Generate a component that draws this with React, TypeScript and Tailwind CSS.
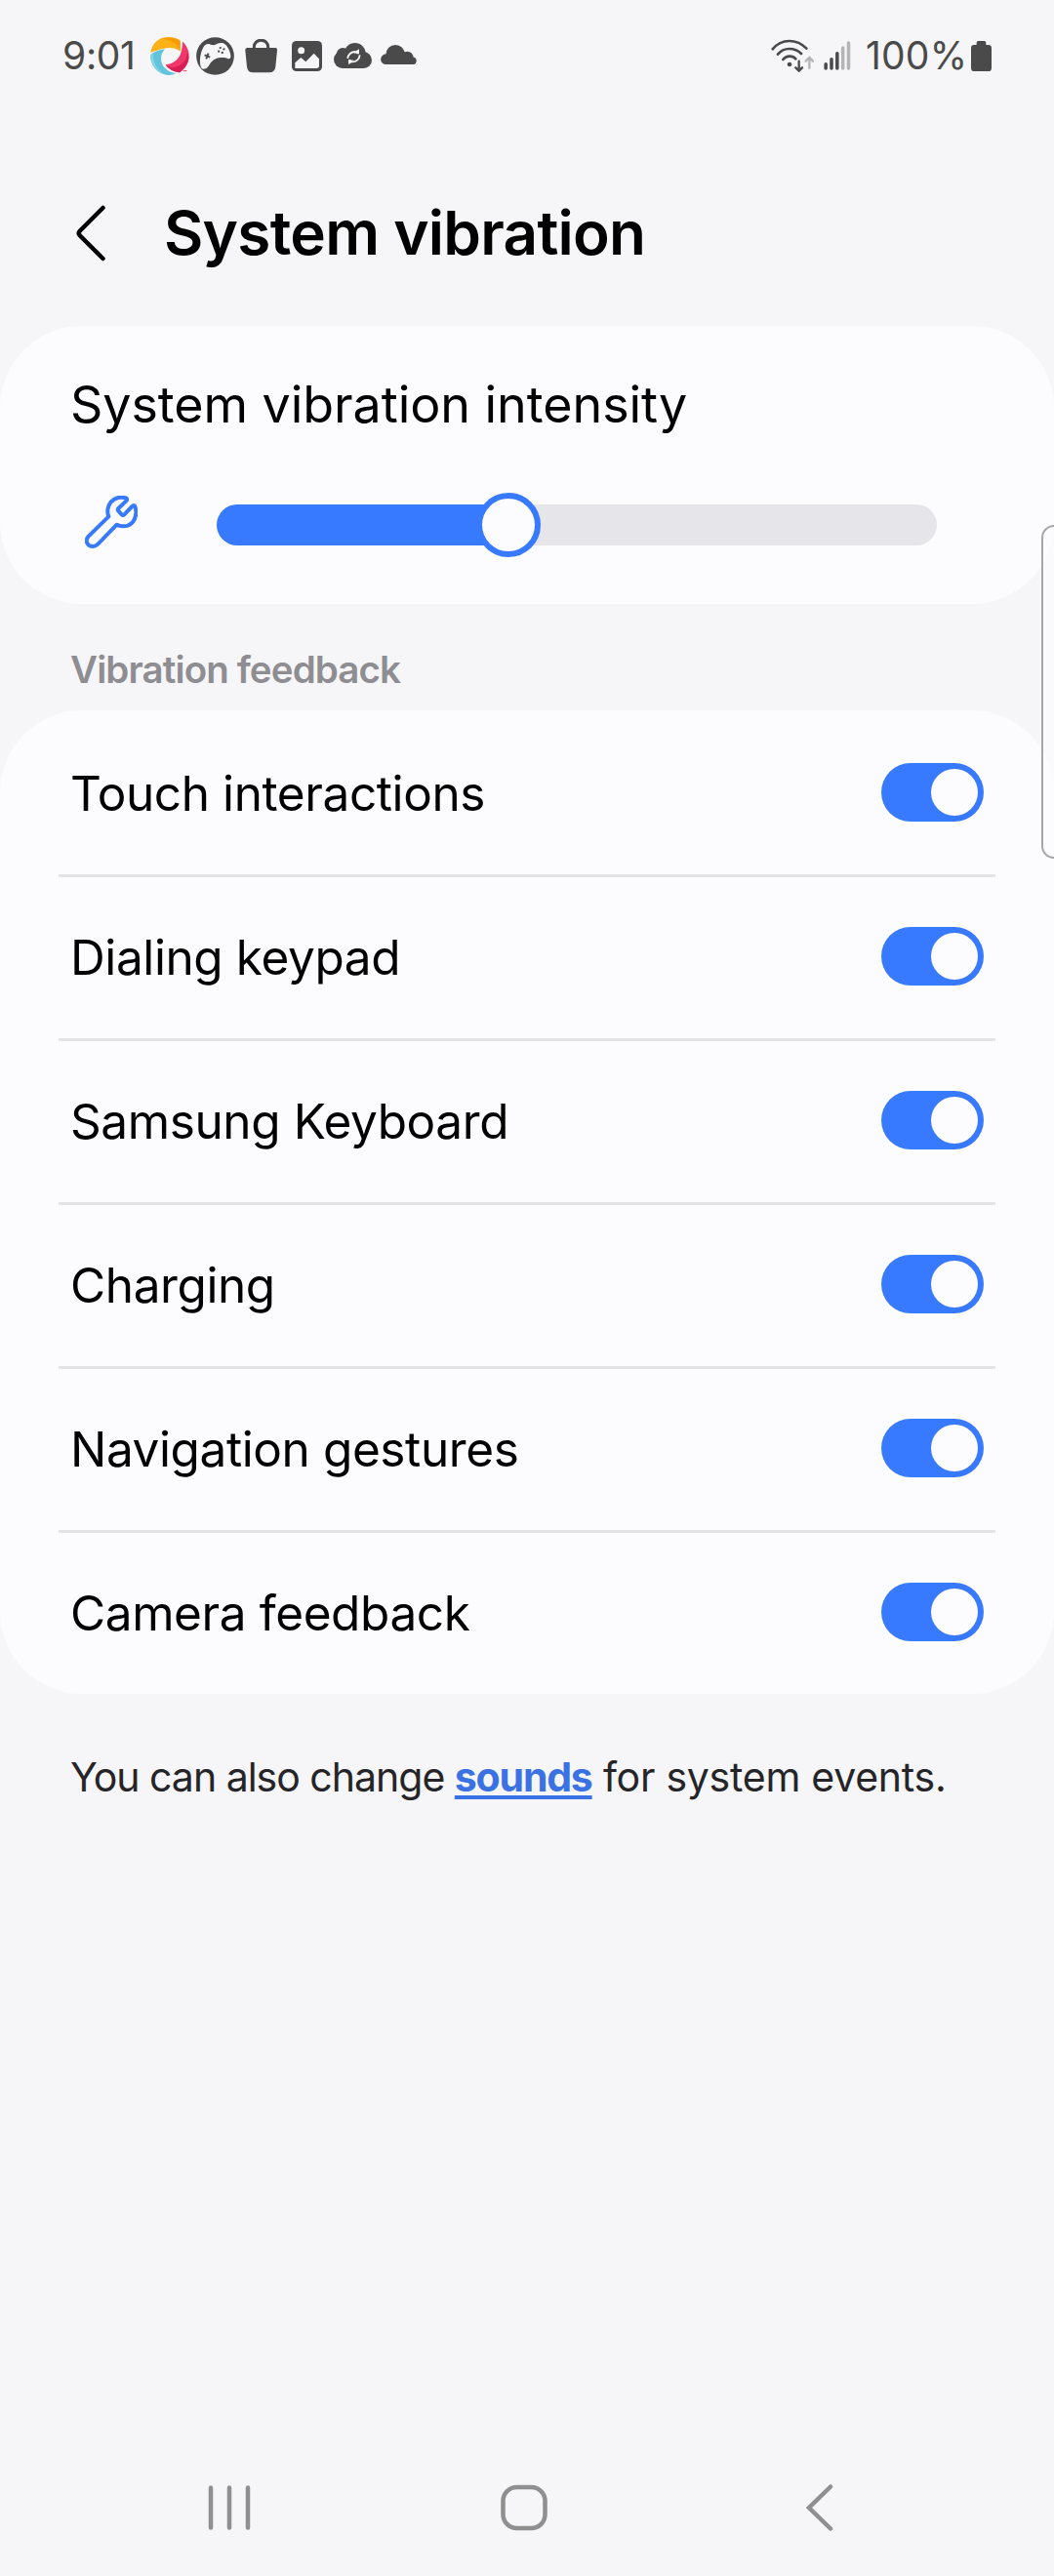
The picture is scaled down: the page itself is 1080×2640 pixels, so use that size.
import React, { useState } from "react";

function StatusBar() {
  return (
    <div className="flex h-[114px] shrink-0 items-center pl-[64px] pr-[64px] text-[39px] text-[#4a4a4a]">
      <span className="w-[90px] tracking-[-0.3px]">9:01</span>
      <svg className="h-[39px] w-[40px]" viewBox="311 54 120 117">
        <path d="M312 102C316 72 340 53 366 54C384 54 397 59 403 65V98C393 88 372 84 352 89C338 92 324 97 312 102Z" fill="#fbb216" />
        <path d="M345 59C372 52 393 59 403 65V98C398 78 378 62 345 59Z" fill="#f99a0b" />
        <path d="M410 68C424 80 431 98 430 115C429 134 418 152 401 163C385 162 368 153 358 139C382 137 400 122 406 100C409 88 410 78 410 68Z" fill="#f0386b" />
        <path d="M425 98C426 128 405 145 378 148C372 147 363 144 358 139C368 153 385 162 401 163C424 147 435 122 425 98Z" fill="#d81e55" />
        <path d="M311 109C322 99 338 93 356 91C340 108 340 134 356 149C366 159 378 163 389 166C380 171 369 172 360 170C331 166 311 140 311 109Z" fill="#62c3dc" />
        <path d="M321 101C315 126 331 157 360 170C331 166 311 140 311 109Z" fill="#86d3e4" />
        <path d="M412 158H423" stroke="#f0386b" strokeWidth="3" />
      </svg>
      <svg className="ml-[7px] h-[39px] w-[39px]" viewBox="452 54 118 117">
        <circle cx="511" cy="112.5" r="58.5" fill="#4a4a4a" />
        <path d="M468 149C461 136 463 105 474 86C479 76 487 73 495 76C501 78 505 80 511 77C518 74 524 70 533 72C546 75 556 92 559 111C560 119 556 122 550 120C543 117 533 116 522 118C505 122 499 130 492 141C484 153 473 156 468 149Z" fill="#f6f6f8" />
        <path d="M478 109L495 116M490 104L483 121" stroke="#4a4a4a" strokeWidth="6" />
        <g fill="#4a4a4a">
          <circle cx="527" cy="87" r="3.5" />
          <circle cx="538" cy="91" r="3.5" />
          <circle cx="522" cy="98" r="3.5" />
          <circle cx="533" cy="102" r="3.5" />
        </g>
      </svg>
      <svg className="ml-[11px] h-[35px] w-[33px]" viewBox="33 60 99 105">
        <path d="M61 92V84A21.5 20.5 0 0 1 104 84V92" fill="none" stroke="#4a4a4a" strokeWidth="9" />
        <path d="M39 87H127Q133 88 132 95L127 145Q125 163 108 163H57Q41 163 39 145L34 95Q33 88 39 87Z" fill="#4a4a4a" />
      </svg>
      <svg className="ml-[15px] h-[31px] w-[31px]" viewBox="177 66 93 93">
        <rect x="177" y="66" width="93" height="93" rx="14" fill="#4a4a4a" />
        <circle cx="206" cy="95" r="10.5" fill="#f6f6f8" />
        <path d="M187 150V133L205 117L220 130L245 104L261 121V142Q261 150 253 150Z" fill="#f6f6f8" />
      </svg>
      <svg className="ml-[12px] h-[26px] w-[39px]" viewBox="306 72 117 78">
        <g fill="#4a4a4a">
          <circle cx="333" cy="123" r="27" />
          <circle cx="334" cy="107" r="20" />
          <circle cx="371" cy="105" r="33" />
          <circle cx="398" cy="125" r="25" />
          <rect x="333" y="110" width="66" height="40" />
        </g>
        <g fill="none" stroke="#f6f6f8" strokeWidth="5.5">
          <path d="M349 120C350 107 360 98 374 99M386 109C385 122 375 131 361 130" />
        </g>
        <path d="M372 98L384 91V106H370ZM363 131L351 138V123H365Z" fill="#f6f6f8" />
        <path d="M370 107H378L374 103ZM357 122H365L361 126Z" fill="#4a4a4a" />
      </svg>
      <svg className="-mt-[2px] ml-[9px] h-[20px] w-[37px]" viewBox="450 78 110 60">
        <g fill="#4a4a4a">
          <circle cx="466" cy="122" r="16" />
          <circle cx="495" cy="107" r="29" />
          <circle cx="531" cy="117" r="19" />
          <circle cx="548" cy="127" r="11.5" />
          <rect x="466" y="112" width="82" height="26" />
        </g>
      </svg>
      <svg className="ml-auto h-[34px] w-[44px]" viewBox="61 58 132 102">
        <g fill="none" stroke="#4a4a4a" strokeWidth="8" strokeLinecap="round">
          <path d="M66 89Q87 64 117 64Q148 64 170 87M82 105Q96 88 117 88Q139 88 154 103M98 121Q106 111 118 111Q130 111 137 119" />
          <path d="M147 126V154M137 146L147 156L157 146" strokeWidth="7" />
        </g>
        <circle cx="118" cy="136" r="7" fill="#4a4a4a" />
        <path d="M179 147V117M168 126L179 115L190 126" fill="none" stroke="#b4b4b5" strokeWidth="7" strokeLinecap="round" />
      </svg>
      <svg className="ml-[10px] h-[30px] w-[28px]" viewBox="221 65 84 90">
        <g strokeWidth="10.5" strokeLinecap="round" stroke="#4a4a4a">
          <path d="M227.5 136V149M245 121V149M262.5 103V149" />
          <path d="M280 86V149M297.5 71V149" stroke="#b4b4b5" />
        </g>
      </svg>
      <span className="ml-[15px] w-[108px] tracking-[0.2px]">100%</span>
      <svg className="h-[31px] w-[21px] shrink-0" viewBox="675 63 63 93">
        <path d="M692 78V68Q692 63 697 63H716Q721 63 721 68V78Z" fill="#4a4a4a" />
        <rect x="675" y="75" width="63" height="81" rx="10" fill="#4a4a4a" />
      </svg>
    </div>
  );
}

function IntensityCard() {
  return (
    <section className="flex h-[285px] shrink-0 flex-col rounded-[84px] bg-[#fcfcff] pt-[41px]">
      <h2 className="pl-[72px] text-[52px] leading-[80px] tracking-[-0.06px]">System vibration intensity</h2>
      <div className="mt-[50px] flex h-[66px] items-center pl-[87px]">
        <svg className="-mt-[6px] h-[54px] w-[54px]" viewBox="81 84 162 162">
          <path
            d="M154 148L92 209Q83 219 88 230Q94 240 106 240Q114 240 121 233L179 173Q195 181 213 176Q236 166 238 138Q238 121 234 115Q230 113 226 117L202 142Q198 146 194 142L184 131Q180 127 184 123L208 100Q213 95 208 91Q196 88 184 90Q156 97 151 127Q150 139 154 148Z"
            fill="none"
            stroke="#387aff"
            strokeWidth="12"
            strokeLinejoin="round"
          />
        </svg>
        <div className="ml-[81px] flex h-[42px] w-[738px] items-center rounded-full bg-[#e6e6ea]">
          <div className="h-[42px] w-[290px] rounded-l-full bg-[#387aff]" />
          <div className="-ml-[24px] size-[66px] shrink-0 rounded-full border-[6px] border-[#387aff] bg-[#fcfcff]" />
        </div>
      </div>
    </section>
  );
}

function SettingRow({ label, divided }: { label: string; divided: boolean }) {
  const [on, setOn] = useState(true);
  return (
    <div className="relative flex h-[168px] items-center justify-between pl-[72px] pr-[72px]">
      {divided && <div className="absolute left-[60px] right-[60px] top-0 h-[3px] bg-[#e3e3e5]" />}
      <span className="pt-[2px] text-[49.5px] leading-[80px] tracking-[-0.4px]">{label}</span>
      <button
        role="switch"
        aria-checked={on}
        aria-label={label}
        onClick={() => setOn(!on)}
        className={
          on
            ? "flex h-[60px] w-[105px] items-center justify-end rounded-full bg-[#387aff] px-[6px]"
            : "flex h-[60px] w-[105px] items-center justify-start rounded-full bg-[#a0a0a5] px-[6px]"
        }
      >
        <span className="size-[48px] rounded-full bg-[#fcfcff]" />
      </button>
    </div>
  );
}

const settings = [
  "Touch interactions",
  "Dialing keypad",
  "Samsung Keyboard",
  "Charging",
  "Navigation gestures",
  "Camera feedback",
];

function NavBar() {
  return (
    <nav className="mt-auto flex h-[140px] items-center pl-[213px]">
      <svg className="h-[48px] w-[44px]" viewBox="0 0 44 48" stroke="#8f8f8f" strokeWidth="4.5" strokeLinecap="round">
        <path d="M3 3.5V44.500M22 3.5V44.500M41 3.5V44.500" />
      </svg>
      <svg className="ml-[256px] h-[48px] w-[48px]" viewBox="0 0 48 48" fill="none" stroke="#8f8f8f" strokeWidth="4.5">
        <rect x="2.5" y="3" width="43" height="42" rx="14" />
      </svg>
      <svg className="ml-[265px] h-[50px] w-[30px]" viewBox="0 0 30 50" fill="none" stroke="#8f8f8f" strokeWidth="4.5" strokeLinecap="round">
        <path d="M25 3.5L3 25L25 46.5" />
      </svg>
    </nav>
  );
}

export default function App() {
  return (
    <main className="relative flex h-[2640px] w-[1080px] flex-col overflow-hidden bg-[#f6f6f8] font-['Inter',sans-serif] text-black">
      <StatusBar />
      <header className="flex h-[220px] shrink-0 items-center pl-[76px] pt-[29px]">
        <svg className="h-[60px] w-[36px]" viewBox="0 0 36 60" fill="none" stroke="#000" strokeWidth="4.5" strokeLinecap="round">
          <path d="M29.500 4L6 27.500Q3.500 30 6 32.500L29.500 56" />
        </svg>
        <h1 className="ml-[56px] text-[62px] font-semibold leading-[80px] tracking-[-0.73px]">System vibration</h1>
      </header>
      <IntensityCard />
      <h3 className="flex h-[109px] shrink-0 items-center pl-[72px] pt-[27px] text-[38.5px] font-semibold tracking-[-0.88px] text-[#8e8e92]">
        Vibration feedback
      </h3>
      <section className="shrink-0 rounded-[84px] bg-[#fcfcff]">
        {settings.map((label, i) => (
          <SettingRow key={label} label={label} divided={i > 0} />
        ))}
      </section>
      <p className="mt-[55px] whitespace-pre pl-[72px] text-[41px] leading-[60px] tracking-[-1px] text-[#252528]">
        You can also change{" "}
        <a href="#sounds" className="font-bold tracking-[-1.2px] text-[#3a72e4] underline decoration-[4px] underline-offset-[4px]">
          sounds
        </a>
        <span className="tracking-[-0.25px]"> for system events.</span>
      </p>
      <NavBar />
      <div className="absolute -right-[20px] top-[538px] h-[342px] w-[33px] rounded-[13px] border-[2.5px] border-[#a6a6a8] bg-[#fcfcfd]/70" />
    </main>
  );
}
